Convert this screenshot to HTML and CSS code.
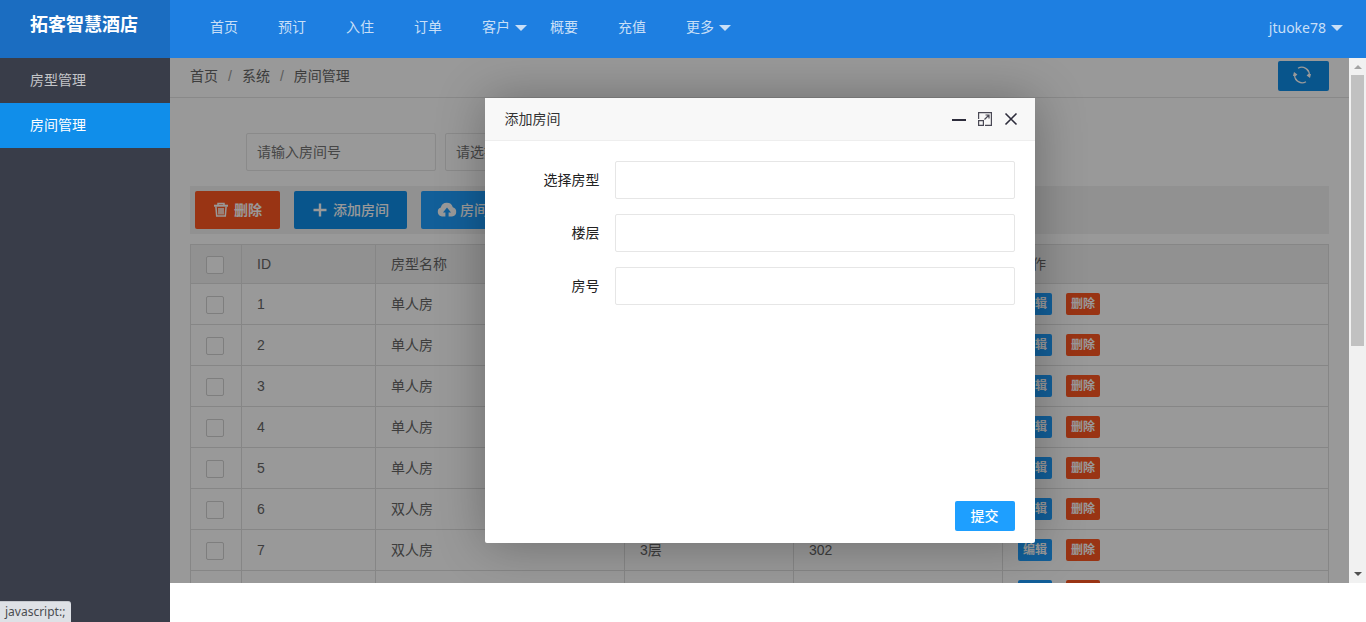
FILE: index.html
```html
<!DOCTYPE html>
<html lang="zh-CN">
<head>
<meta charset="utf-8">
<title>拓客智慧酒店</title>
<link rel="stylesheet" href="styles.css">
</head>
<body>
<div class="app">
  <header class="header">
    <h1 class="logo">拓客智慧酒店</h1>
    <nav class="nav">
      <a href="#">首页</a>
      <a href="#">预订</a>
      <a href="#">入住</a>
      <a href="#">订单</a>
      <a href="#" class="has-menu">客户</a>
      <a href="#">概要</a>
      <a href="#">充值</a>
      <a href="#" class="has-menu">更多</a>
      <a href="#" class="has-menu user">jtuoke78</a>
    </nav>
  </header>
  <aside class="side">
    <a href="#">房型管理</a>
    <a href="#" class="active">房间管理</a>
  </aside>
  <main class="frame">
    <div class="view">
      <div class="crumb-bar">
        <div class="crumbs"><a href="#">首页</a><span>/</span><a href="#">系统</a><span>/</span><a href="#">房间管理</a></div>
        <button type="button" class="btn refresh" aria-label="刷新">
          <svg width="18" height="18" viewBox="0 0 18 18" fill="none" stroke="currentColor" stroke-width="1.3"><path d="M5 2.3A7.6 7.6 0 0 1 16.4 9M13 15.7A7.6 7.6 0 0 1 1.6 9"/><path d="M2.500 12.500A7.600 7.600 0 0 0 4 14.500M15.500 5.500A7.600 7.600 0 0 0 14 3.500" /><path d="M13.600 9.500l1.600-1.500h2.800l-1 4zM4.400 8.500l-1.600 1.500H0l1-4z" fill="currentColor" stroke="none"/></svg>
        </button>
      </div>
      <div class="content">
        <form class="search">
          <input type="text" placeholder="请输入房间号" aria-label="房间号">
          <input type="text" placeholder="请选择房型" aria-label="房型">
        </form>
        <div class="toolbar">
          <button type="button" class="btn danger strong"><svg width="16" height="16" viewBox="0 0 16 16" fill="none" stroke="currentColor" stroke-width="1.5"><path d="M1 3.700h14" stroke-width="2"/><path d="M5 3V1.500h6V3M2.900 4.500l.8 9.500h8.600l.8-9.500M6 6v6.500M8 6v6.500M10 6v6.500"/></svg>删除</button>
          <button type="button" class="btn primary"><svg width="16" height="16" viewBox="0 0 16 16" stroke="currentColor" stroke-width="2.4"><path d="M8 1.500v13M1.500 8h13"/></svg>添加房间</button>
          <button type="button" class="btn normal"><svg width="16" height="16" viewBox="2 0 16 16" fill="currentColor" overflow="visible"><path fill-rule="evenodd" d="M5 14.5A4.6 4.6 0 0 1 3.8 5.600A6.200 6.200 0 0 1 15.800 5.300A4.700 4.700 0 0 1 15 14.500H11.600V10.500H14L10 5.500 6 10.500H8.400V14.500Z"/></svg>房间导入</button>
        </div>
        <table class="rooms">
          <colgroup><col class="c-check"><col class="c-id"><col class="c-type"><col class="c-floor"><col class="c-number"><col></colgroup>
          <thead><tr><th><input type="checkbox" aria-label="全选"></th><th>ID</th><th>房型名称</th><th>楼层</th><th>房号</th><th>操作</th></tr></thead>
          <tbody>
            <tr><td><input type="checkbox" aria-label="选择 1"></td><td>1</td><td>单人房</td><td>1层</td><td>101</td><td><div class="ops"><button type="button" class="btn mini normal">编辑</button><button type="button" class="btn mini danger">删除</button></div></td></tr>
            <tr><td><input type="checkbox" aria-label="选择 2"></td><td>2</td><td>单人房</td><td>1层</td><td>102</td><td><div class="ops"><button type="button" class="btn mini normal">编辑</button><button type="button" class="btn mini danger">删除</button></div></td></tr>
            <tr><td><input type="checkbox" aria-label="选择 3"></td><td>3</td><td>单人房</td><td>2层</td><td>201</td><td><div class="ops"><button type="button" class="btn mini normal">编辑</button><button type="button" class="btn mini danger">删除</button></div></td></tr>
            <tr><td><input type="checkbox" aria-label="选择 4"></td><td>4</td><td>单人房</td><td>2层</td><td>202</td><td><div class="ops"><button type="button" class="btn mini normal">编辑</button><button type="button" class="btn mini danger">删除</button></div></td></tr>
            <tr><td><input type="checkbox" aria-label="选择 5"></td><td>5</td><td>单人房</td><td>2层</td><td>203</td><td><div class="ops"><button type="button" class="btn mini normal">编辑</button><button type="button" class="btn mini danger">删除</button></div></td></tr>
            <tr><td><input type="checkbox" aria-label="选择 6"></td><td>6</td><td>双人房</td><td>3层</td><td>301</td><td><div class="ops"><button type="button" class="btn mini normal">编辑</button><button type="button" class="btn mini danger">删除</button></div></td></tr>
            <tr><td><input type="checkbox" aria-label="选择 7"></td><td>7</td><td>双人房</td><td>3层</td><td>302</td><td><div class="ops"><button type="button" class="btn mini normal">编辑</button><button type="button" class="btn mini danger">删除</button></div></td></tr>
            <tr><td></td><td></td><td></td><td></td><td></td><td><div class="ops"><button type="button" class="btn mini normal" aria-label="编辑"></button><button type="button" class="btn mini danger" aria-label="删除"></button></div></td></tr>
          </tbody>
        </table>
      </div>
      <div class="shade">
        <section class="dialog" role="dialog" aria-labelledby="dialog-title">
          <div class="dialog-head">
            <h2 id="dialog-title">添加房间</h2>
            <button type="button" class="tool" aria-label="最小化"><svg width="16" height="16" viewBox="0 0 16 16" stroke="#2e2d3c" stroke-width="2"><path d="M1 9h14"/></svg></button>
            <button type="button" class="tool" aria-label="最大化"><svg width="16" height="16" viewBox="0 0 16 16" fill="none" stroke="#4a4955" stroke-width="1.200"><path d="M1.600 8V1.600h12.800v12.800H8M1.600 9.600h4.800v4.800H1.600zM7.500 8.500l4.500-4.500M8.500 4H12v3.500"/></svg></button>
            <button type="button" class="tool" aria-label="关闭"><svg width="16" height="16" viewBox="0 0 16 16" stroke="#2e2d3c" stroke-width="1.600"><path d="M2.500 2.500l11 11M13.500 2.500l-11 11"/></svg></button>
          </div>
          <form class="dialog-body">
            <div class="field"><label for="type">选择房型</label><input id="type" type="text"></div>
            <div class="field"><label for="floor">楼层</label><input id="floor" type="text"></div>
            <div class="field"><label for="number">房号</label><input id="number" type="text"></div>
            <button type="button" class="btn submit">提交</button>
          </form>
        </section>
      </div>
    </div>
    <div class="scroll" aria-hidden="true"><i class="up"></i><i class="thumb"></i><i class="down"></i></div>
  </main>
  <div class="status">javascript:;</div>
</div>
</body>
</html>
```

FILE: styles.css
```css
* { box-sizing: border-box; }

body {
  margin: 0;
  background: #fff;
  color: #666;
  font: 14px/20px "Liberation Sans", "Noto Sans CJK SC", sans-serif;
}

a { color: inherit; text-decoration: none; }
button, input { font: inherit; }
h1, h2 { margin: 0; }

.app {
  display: grid;
  grid-template: 58px minmax(0, 1fr) / 170px minmax(0, 1fr);
  height: 100vh;
}

/* top bar */
.header {
  grid-column: 1 / 3;
  display: flex;
  background: #1e7fe1;
  color: #c8dff7;
}
.logo {
  width: 170px;
  padding: 14px 0 0 30px;
  background: #1b6dc1;
  color: #fff;
  font-size: 18px;
  line-height: 22px;
}
.nav { display: flex; flex: 1; padding: 0 20px; }
.nav a { position: relative; padding: 0 20px; line-height: 55px; }
.nav .user { margin-left: auto; font-family: "Noto Sans", sans-serif; }
.has-menu::after {
  content: "";
  position: absolute;
  top: 25px;
  right: 3px;
  border: 6px solid transparent;
  border-top-color: #c8dff7;
  border-bottom: 0;
}

/* side menu */
.side { background: #393d49; color: #c4c5c8; }
.side a { display: block; padding: 0 30px; line-height: 45px; }
.side .active { background: #108eea; color: #fff; }

/* content frame */
.frame { display: flex; min-width: 0; margin-bottom: 39px; }
.view { position: relative; flex: 1; min-width: 0; overflow: hidden; }

.crumb-bar {
  display: flex;
  align-items: center;
  justify-content: space-between;
  height: 40px;
  padding: 0 20px 3px;
  border-bottom: 1px solid #e5e5e5;
}
.crumbs span { margin: 0 10px; color: #999; }
.content { padding: 35px 20px; }

.btn {
  display: inline-flex;
  align-items: center;
  justify-content: center;
  gap: 5px;
  height: 38px;
  padding: 0 18px;
  border: 0;
  border-radius: 2px;
  background: #1e9fff;
  color: #fff;
  white-space: nowrap;
}
.refresh { width: 51px; height: 30px; padding: 0 4px 2px 0; background: #0e8eea; }
.toolbar .btn { font-weight: 500; }
.toolbar .strong { font-weight: 700; }
.primary { background: #0e8eea; }
.danger { background: #ff5722; }
.mini { width: 34px; height: 22px; padding: 0 5px; font-size: 12px; font-weight: 700; }

.search { display: flex; gap: 9px; padding-left: 56px; }
.search input, .field input {
  height: 38px;
  padding: 0 10px;
  border: 1px solid #e6e6e6;
  border-radius: 2px;
  background: #fff;
  outline: 0;
}
.search input { width: 190px; }
.search input::placeholder { color: #757575; opacity: 1; }

.toolbar {
  display: flex;
  gap: 14px;
  margin: 15px 0 10px;
  padding: 5px;
  background: #f2f2f2;
}

/* room table */
.rooms { width: 100%; table-layout: fixed; border-collapse: collapse; }
.rooms th, .rooms td {
  height: 41px;
  padding: 0 15px;
  border: 1px solid #e0e0e0;
  text-align: left;
  font-weight: 400;
}
.rooms th { height: 39px; background: #f2f2f2; }
.c-check { width: 51px; }
.c-id { width: 134px; }
.c-type { width: 249px; }
.c-floor { width: 169px; }
.c-number { width: 209px; }
.rooms input {
  display: block;
  appearance: none;
  width: 18px;
  height: 18px;
  margin: 2px 0 0;
  border: 1px solid #d2d2d2;
  border-radius: 2px;
  background: #fff;
}
.ops { display: flex; gap: 14px; }

/* dialog */
.shade {
  position: absolute;
  inset: 0;
  display: grid;
  place-items: center;
  background: rgba(0, 0, 0, .4);
}
.dialog {
  display: flex;
  flex-direction: column;
  width: 550px;
  height: 445px;
  border-radius: 2px;
  background: #fff;
  box-shadow: 1px 1px 50px rgba(0, 0, 0, .3);
  color: #333;
}
.dialog-head {
  display: flex;
  align-items: center;
  gap: 10px;
  height: 43px;
  padding: 0 16px 0 20px;
  border-bottom: 1px solid #eee;
  background: #f8f8f8;
}
.dialog-head h2 { flex: 1; font-size: 14px; font-weight: 400; }
.tool { display: flex; padding: 0; border: 0; background: none; }
.dialog-body {
  display: flex;
  flex: 1;
  flex-direction: column;
  gap: 15px;
  padding: 20px 20px 12px;
}
.field { display: flex; align-items: center; }
.field label { width: 110px; padding: 0 15px; text-align: right; color: #222; }
.field input { flex: 1; min-width: 0; }
.submit { align-self: flex-end; width: 60px; height: 30px; margin-top: auto; padding: 0; font-weight: 500; }

/* scroll track */
.scroll {
  display: flex;
  flex-direction: column;
  align-items: center;
  width: 17px;
  padding: 7px 0;
  background: #f1f1f1;
}
.up { border: 4px solid transparent; border-top: 0; border-bottom-color: #a3a3a3; }
.thumb { width: 13px; height: 271px; margin-top: 6px; background: #c1c1c1; }
.down { margin-top: auto; border: 4px solid transparent; border-bottom: 0; border-top-color: #505050; }

.status {
  position: fixed;
  bottom: 0;
  left: 0;
  padding: 0 6px 0 5px;
  border-top: 1px solid #c5c8ce;
  border-top-right-radius: 3px;
  background: #dee1e6;
  color: #4a4c50;
  font: 12px/20px "Noto Sans", sans-serif;
}
```
